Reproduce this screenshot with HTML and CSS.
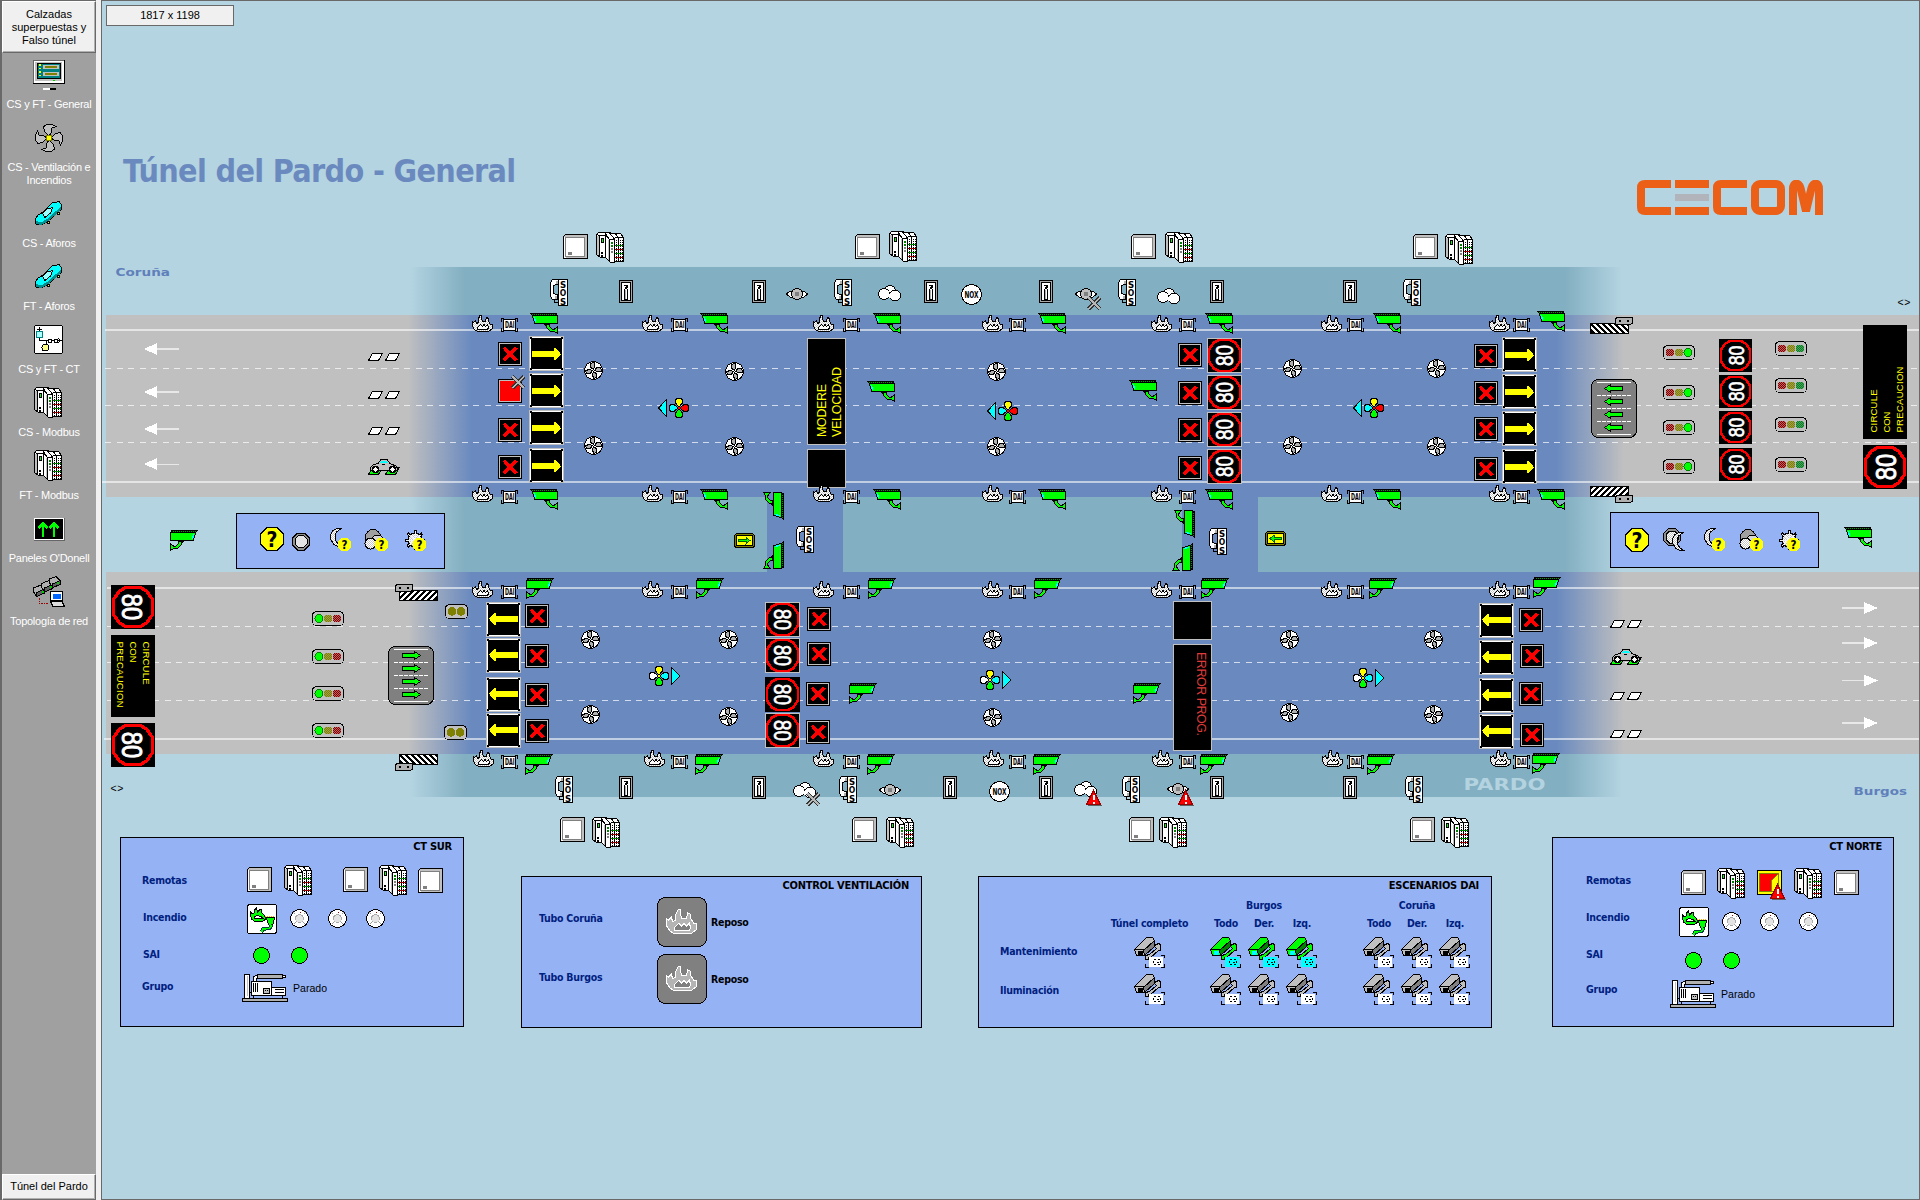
FILE: index.html
```html
<!DOCTYPE html>
<html lang="es">
<head>
<meta charset="utf-8">
<title>Túnel del Pardo - General</title>
<link rel="stylesheet" href="styles.css">
</head>
<body>
<svg class="sprite" aria-hidden="true">
<defs>
<clipPath id="bar-clip"><rect x="1" y="1" width="37" height="9"/></clipPath>
<pattern id="dither" width="2" height="2" patternUnits="userSpaceOnUse"><rect width="2" height="2" fill="#fff"/><path d="M0 0h1v1h-1zM1 1h1v1h-1z" fill="#c8c8c8"/></pattern>
<pattern id="dither-red" width="2" height="2" patternUnits="userSpaceOnUse"><rect width="2" height="2" fill="#c06060"/><path d="M0 0h1v1h-1zM1 1h1v1h-1z" fill="#800000"/></pattern>
<pattern id="dither-green" width="2" height="2" patternUnits="userSpaceOnUse"><rect width="2" height="2" fill="#50a050"/><path d="M0 0h1v1h-1zM1 1h1v1h-1z" fill="#008030"/></pattern>
<pattern id="dither-olive" width="2" height="2" patternUnits="userSpaceOnUse"><rect width="2" height="2" fill="#a0a050"/><path d="M0 0h1v1h-1zM1 1h1v1h-1z" fill="#808000"/></pattern>
<g id="cam">
<path d="M2.500 2.500H27.500V10.500H5L3.500 7Z" fill="#0f0" stroke="#000"/>
<path d="M0 0H27V3H2.500Z"/><path d="M2 1.500H26" stroke="#00a000" stroke-dasharray="1 1"/>
<path d="M4 4h1v2h1v3h-1v-1h-1z" fill="#0ff"/>
<path d="M14.500 11.500H19.500V13.500L22.500 16.500H24L27.500 13.500V20.500L24.500 18.500H20.500L16.500 14.500V12.500Z" fill="#0f0" stroke="#000"/>
</g>
<g id="camr"><use href="#cam" transform="translate(28 0) scale(-1 1)"/></g>
<g id="camdn"><use href="#camr" transform="translate(21 0) rotate(90)"/></g>
<g id="camup"><use href="#cam" transform="translate(21 0) rotate(90)"/></g>
<g id="fire">
<path d="M.5 6.500V11.500L2.500 14.500 5.500 16.500H16.500L20.500 13.500V9.500H18.500L16.500 6.500V3.500L14.500 2.500 13.500 6.500H10.500L9.500 3V.5H8L6.500 3.500V7.500L4.500 8.500 3.500 5.500 1.500 7.500Z" fill="url(#dither)" stroke="#000"/>
<path d="M5.500 12.500V14.500H15.500L16.500 12.500 15.500 9.500 13.500 11.500 12 9.500 10.500 11.500 8.500 9.500Z" fill="#fff" stroke="#000"/>
</g>
<g id="dai">
<path d="M3 .5H.5V4M14 .5H16.500V4M3 13.500H.5V10M14 13.500H16.500V10" fill="none" stroke="#000"/>
<rect x="2.500" y="1.500" width="12" height="11" fill="#fff" stroke="#000"/>
<text class="glyph" x="4" y="10" font-size="8" textLength="9.500" lengthAdjust="spacingAndGlyphs">DAI</text>
</g>
<g id="sos">
<path d="M.5 3.500L2.500 .5H8.500V5.500H5.500L3.500 7V14L5.500 15.500H7.500V20.500H2.500L.5 17.500Z" fill="#fff" stroke="#000"/>
<path d="M6 2h2v3h-2zM5 17h2v3h-2z" fill="#b0b0b0"/>
<path d="M4.500 21V23.500H9" fill="none" stroke="#000"/>
<rect x="8.500" y=".5" width="9" height="26" fill="#fff" stroke="#000"/>
<text class="glyph" x="13" y="8.700" font-size="9.500" text-anchor="middle">S</text>
<text class="glyph" x="13" y="17" font-size="8.500" text-anchor="middle">O</text>
<text class="glyph" x="13" y="25.500" font-size="9.500" text-anchor="middle">S</text>
</g>
<g id="ext">
<rect x=".5" y=".5" width="13" height="22" fill="#a8a8a8" stroke="#000"/>
<rect x="2.500" y="2.500" width="9" height="18" fill="#fff" stroke="#000"/>
<path d="M5.500 19V9.500L7 7.500 8.500 9.500V19Z" fill="#fff" stroke="#000"/><path d="M6 10h1v9h-1z" fill="#b0b0b0"/>
<path d="M5 5.500H9M8.500 5V8M7 6v2" stroke="#000" fill="none"/>
</g>
<g id="eye">
<path d="M.5 6L4 3H18L21.500 6 18 9H4Z" fill="#fff" stroke="#000"/>
<circle cx="11" cy="6" r="5.500" fill="#c0c0c0" stroke="#000"/><circle cx="11" cy="6" r="2.300" fill="#808080"/>
</g>
<g id="cloud">
<g fill="#fff" stroke="#000"><circle cx="12" cy="6" r="5.500"/><circle cx="6" cy="9" r="5.500"/><circle cx="17" cy="10.500" r="5.500"/></g>
<path d="M6 6h5v6h-5zM11 9h5v4h-5z" fill="#fff"/>
</g>
<g id="nox"><circle r="10" fill="#fff" stroke="#000"/>
<text class="glyph" x="-7" y="3.500" font-size="9.500" textLength="14" lengthAdjust="spacingAndGlyphs">NOX</text></g>
<g id="cross"><path d="M1.500 1.500L13 13M13 1.500L1.500 13" stroke="#333" stroke-width="4"/><path d="M1.500 1.500L13 13M13 1.500L1.500 13" stroke="#b8b8b8" stroke-width="2"/></g>
<g id="alarm"><path d="M9 2L16 15.500H2Z" fill="#606060"/><path d="M7.500 .5L14.500 14.500H.5Z" fill="#f00" stroke="#900"/><path d="M6.500 5h2v5h-2zM6.500 11.500h2v2h-2z" fill="#fff"/></g>
<g id="cab">
<path d="M2 0H25V25H0V2Z"/><path d="M2 1H24V24H1V2Z" fill="#c0c0c0"/><path d="M1 3h2v21h-2z" fill="#fff"/>
<rect x="2.500" y="3.500" width="19" height="19" fill="#fff" stroke="#808080"/><path d="M5 18h4v3h-4z" fill="#808080"/>
</g>
<g id="plc">
<path d="M.5 2.500L2.500 .5H13.500L16 1.500H24.500L27.500 5.500V29.500H20L18.500 30.500H14.500L9.500 25.500H4.500L.5 22.500Z" fill="#fff" stroke="#000"/>
<path d="M1 4h2v19h-2zM12 8h1v20h-1z" fill="#c0c0c0"/>
<path d="M3.500 24V3.500H9.500V25.500M1 2.500L3.500 3.500M9.500 3.500L13.500 7.500M13.500 30V7.500H18.500V30M13.500 1L18.500 7M18.500 5.500H27M22.500 5V30M19 1.500L22.500 5.500M9 1L13 7" fill="none" stroke="#000"/>
<path d="M5 6h3v5h-3zM5 20h2v2h-2zM5 23h2v2h-2z"/><path d="M6 7h1v3h-1z" fill="#0f0"/>
<path d="M15 10h2v2h-2zM15 13h2v2h-2z" fill="#008000"/><path d="M15 16h2v2h-2zM15 19h2v2h-2z" fill="#808080"/>
<path d="M20.500 8V29M24.500 8V29M26.500 8V29" stroke="#000" stroke-dasharray="1 1"/>
<path d="M19 13.500H27M19 21.500H27" stroke="#008000"/><path d="M19 17.500H27M19 25.500H27" stroke="#900000"/>
</g>
<path id="blade" d="M0 -1L-2.500 -3 -3.500 -6.500 -1 -8H.5V-6L1 -4Z"/>
<g id="fan"><circle r="9" fill="#fff" stroke="#000"/><g fill="#b0b0b0" stroke="#000"><use href="#blade"/><use href="#blade" transform="rotate(90)"/><use href="#blade" transform="rotate(180)"/><use href="#blade" transform="rotate(270)"/></g></g>
<path id="petal" d="M0 -1L-3.500 -5V-8L-2 -9.500H2L3.500 -8V-5Z" stroke="#000"/>
<g id="rose-l"><path d="M-20.500 0L-12.500 -8.500V8.500Z" fill="#0ff" stroke="#000"/><use href="#petal" fill="#ff0"/><use href="#petal" fill="#f00" transform="rotate(90)"/><use href="#petal" fill="#0f0" transform="rotate(180)"/><use href="#petal" fill="#0ff" transform="rotate(270)"/><path d="M-1 -1h2v2h-2z" fill="#f00"/></g>
<g id="rose-r"><path d="M21 0L12.500 -8.500V8.500Z" fill="#0ff" stroke="#000"/><use href="#petal" fill="#ff0"/><use href="#petal" fill="#0ff" transform="rotate(90)"/><use href="#petal" fill="#0f0" transform="rotate(180)"/><use href="#petal" fill="#fff" transform="rotate(270)"/><path d="M-1 -1h2v2h-2z" fill="#ff0"/></g>
<g id="sx"><rect width="24" height="24"/><rect x="1.500" y="1.500" width="21" height="21" fill="none" stroke="#c0c0c0"/><path d="M6 5.500L18.500 18.500M18.500 5.500L6 18.500" stroke="#f00" stroke-width="3.500"/></g>
<g id="sx-fail"><rect width="24" height="24"/><rect x="1.500" y="1.500" width="21" height="21" fill="#f00" stroke="#c0c0c0"/></g>
<g id="lane-frame"><rect width="35" height="35" fill="#c0c0c0"/><rect x="1.500" y="1.500" width="32" height="32" stroke="#fff"/><path d="M1 1h2v2h-2zM32 1h2v2h-2zM1 32h2v2h-2zM32 32h2v2h-2z"/></g>
<g id="ar"><use href="#lane-frame"/><path d="M3 15H25V12H27L31.500 17.500V18.500L27 24H25V21H3Z" fill="#ff0"/></g>
<g id="al"><use href="#lane-frame"/><path d="M32 14H10V11H8L3.500 16.500V17.500L8 23H10V20H32Z" fill="#ff0"/></g>
<g id="disc80"><rect x="-17.500" y="-17.500" width="35" height="35"/><path d="M-6 -15.500H6L11 -12.500 15.500 -6V6L11 12.500 6 15.500H-6L-11 12.500 -15.500 6V-6L-11 -12.500Z" fill="none" stroke="#f00" stroke-width="2.600"/></g>
<g id="v80"><use href="#disc80"/><text class="led80" transform="rotate(-90)" x="-10.500" y="8.500" textLength="21" lengthAdjust="spacingAndGlyphs">80</text></g>
<g id="w80"><use href="#disc80"/><text class="led80" transform="rotate(90)" x="-10.500" y="8.500" textLength="21" lengthAdjust="spacingAndGlyphs">80</text></g>
<g id="tl-body"><rect x=".5" y=".5" width="31" height="14" rx="4" fill="#c0c0c0" stroke="#000"/></g>
<g id="tl-r"><use href="#tl-body"/><circle cx="7" cy="7.500" r="4" fill="url(#dither-red)"/><circle cx="16" cy="7.500" r="4" fill="url(#dither-olive)"/><circle cx="25" cy="7.500" r="4" fill="#0f0" stroke="#008000"/></g>
<g id="tl-l"><use href="#tl-body"/><circle cx="25" cy="7.500" r="4" fill="url(#dither-red)"/><circle cx="16" cy="7.500" r="4" fill="url(#dither-olive)"/><circle cx="7" cy="7.500" r="4" fill="#0f0" stroke="#008000"/></g>
<g id="tl-off"><use href="#tl-body"/><circle cx="7" cy="7.500" r="4" fill="url(#dither-red)"/><circle cx="16" cy="7.500" r="4" fill="url(#dither-olive)"/><circle cx="25" cy="7.500" r="4" fill="url(#dither-green)"/></g>
<g id="tl2"><rect x=".5" y=".5" width="22" height="14" rx="4" fill="#c0c0c0" stroke="#000"/><circle cx="7" cy="7.500" r="4.300" fill="#808000"/><circle cx="16" cy="7.500" r="4.300" fill="#808000"/></g>
<path id="garrow" d="M.5 4.500L6.500 .5V2.500H18.500V6.500H6.500V8.500Z" fill="#0f0" stroke="#000"/>
<g id="lanes"><rect x=".5" y=".5" width="45" height="58" rx="7" fill="#808080" stroke="#000"/><path d="M6 3.500H40M6 55.500H40" stroke="#fff"/><path d="M6 16.500H40M6 29.500H40M6 42.500H40" stroke="#fff" stroke-dasharray="4 1"/></g>
<g id="lanes-l"><use href="#lanes"/><use href="#garrow" x="13" y="5"/><use href="#garrow" x="13" y="18"/><use href="#garrow" x="13" y="31"/><use href="#garrow" x="13" y="44"/></g>
<g id="lanes-r"><use href="#lanes-l" transform="translate(46 0) scale(-1 1)"/></g>
<g id="bar"><rect width="39" height="11"/><path clip-path="url(#bar-clip)" d="M-3 0L8 11M3 0L14 11M9 0L20 11M15 0L26 11M21 0L32 11M27 0L38 11M33 0L44 11" stroke="#fff" stroke-width="2.400"/></g>
<g id="box"><path d="M2 .5H17.500V6L15.500 7.500H.5V2Z" fill="#b0b0b0" stroke="#000"/><path d="M4 3h2v2h-2zM12 3h2v2h-2z"/></g>
<g id="det"><path d="M4.500 .5H14.500L10.500 7.500H.5ZM21.500 .5H31.500L27.500 7.500H17.500Z" fill="#fff" stroke="#000"/></g>
<g id="car"><path d="M4.500 8.500H14.500L10.500 15.500H.5ZM21.500 8.500H31.500L27.500 15.500H17.500Z" fill="#0f0" stroke="#000"/><path d="M2.500 11V8.500L5 6 10 4.500 13 .5H19L22 4.500 28 7 29.500 9V11H2.500Z" fill="#c0c0c0" stroke="#000"/><path d="M12 4L14 1.500H18L20 4Z" fill="#0ff"/><path d="M14 5.500H17" stroke="#000"/><g fill="#fff" stroke="#000" stroke-width="1.500"><circle cx="7.500" cy="10.500" r="3"/><circle cx="24.500" cy="10.500" r="3"/></g></g>
<g id="exit"><rect x=".5" y=".5" width="20" height="14" rx="3" fill="#808000" stroke="#000"/><rect x="2.500" y="2.500" width="16" height="10" fill="#ff0" stroke="#000"/><path d="M4.500 6.500H12V4.500L16 7.500 12 10.500V8.500H4.500Z" fill="#0f0" stroke="#006000"/></g>
<g id="q"><path d="M-5 -11.500H5L11.500 -5V5L5 11.500H-5L-11.500 5V-5Z" fill="#ff0" stroke="#000"/><text class="glyph" x="0" y="7.500" font-size="21" text-anchor="middle">?</text></g>
<g id="qs"><path d="M-3 -6.500H3L6.500 -3V3L3 6.500H-3L-6.500 3V-3Z" fill="#ff0"/><text class="glyph" x="0" y="4.500" font-size="11.500" text-anchor="middle">?</text></g>
<g id="ring"><path d="M-3.500 -8.500H3.500L8.500 -3.500V3.500L3.500 8.500H-3.500L-8.500 3.500V-3.500Z" fill="#909090" stroke="#000"/><path d="M-2.500 -6H2.500L6 -2.500V2.500L2.500 6H-2.500L-6 2.500V-2.500Z" fill="url(#dither)" stroke="#000"/></g>
<g id="moon"><path d="M12 .5H7L2.500 3 .5 7V11L3.500 16 8 18.500H12L8 16 5.500 12 5 8 6.500 4 9 2Z" fill="url(#dither)" stroke="#000"/></g>
<g id="orbs"><circle cx="0" cy="0" r="7.500" fill="#a0a0a0" stroke="#000"/><circle cx="4.500" cy="4.500" r="6.500" fill="#d8d8d8" stroke="#000"/><circle cx="-2.500" cy="6.500" r="5.500" fill="url(#dither)" stroke="#000"/></g>
<g id="sun"><g stroke="#000" stroke-width="3"><path d="M0 -10V10M-10 0H10M-7.500 -6.500L7.500 6.500M7.500 -6.500L-7.500 6.500"/></g><circle r="7" fill="url(#dither)" stroke="#000"/><path d="M0 -9V9M-9 0H9M-6.500 -5.500L6.500 5.500M6.500 -5.500L-6.500 5.500" stroke="#f0f0f0"/></g>
<g id="hose"><rect x=".5" y=".5" width="29" height="29" rx="2.500" fill="#fff" stroke="#000"/><path d="M3.500 7.500L5 9.500 7.500 9 8 5.500 9.500 3.500 10.500 8 12.500 6 14.500 5.500 15 9 17.500 11.500 19 15 15 17.500 7.500 17.500 4.500 15 3.500 11Z" fill="#0f0" stroke="#000"/><path d="M7.500 14.500V12.500L10 11.500 14 12.500 16 14.500Z" fill="#fff" stroke="#000"/><path d="M19 13H27.500L26.500 19.500 24.500 21H22L20.500 18Z" fill="#0f0" stroke="#000"/><path d="M23 21L24 22 22.500 24.500 16 25 14.500 28" fill="none" stroke="#004040" stroke-width="3.500"/><path d="M23 20L24 22 22.500 24.500 16 25 14.500 28" fill="none" stroke="#0f0" stroke-width="1.500"/><path d="M18 12.500H28" stroke="#fa0" stroke-dasharray="1 1"/></g>
<g id="dome"><circle r="9" fill="#fff" stroke="#000"/><circle r="4" fill="url(#dither)" stroke="#aaa"/><path d="M-6 -6l2 2M6 -6l-2 2M-6 6l2 -2M6 6l-2 -2" stroke="#999"/><path d="M0 -7h1v1h-1z" fill="#900"/></g>
<circle id="ok" r="8" fill="#0f0" stroke="#000"/>
<g id="gen"><rect x="2.500" y=".5" width="5" height="24" fill="#fff" stroke="#000"/><path d="M5 2v20" stroke="#c0c0c0"/><path d="M11.500 8V3L13.500 1.500H16V4H14.500V8Z" fill="#fff" stroke="#000"/><rect x="15.500" y=".5" width="25" height="4" fill="#b0b0b0" stroke="#000"/><rect x="40.500" y="1.500" width="3" height="2" fill="#fff" stroke="#000"/><rect x="9.500" y="7.500" width="20" height="14" fill="#fff" stroke="#000"/><rect x="29.500" y="13.500" width="14" height="8" fill="#fff" stroke="#000"/><path d="M11.500 9v9M13.500 9v9M15.500 9v9M33 15.500H42M33 18.500H42M9 18h-2M11.500 22v3M40.500 22v3" stroke="#000"/><rect x="21.500" y="14.500" width="6" height="5" fill="#c0c0c0" stroke="#000"/><path d="M23 16h1v1h-1zM25 16h1v1h-1z"/><rect x=".5" y="24.500" width="45" height="3" fill="#b0b0b0" stroke="#000"/></g>
<g id="ptz" stroke="#000"><path class="ptz-mount" d="M11.500 18.500L15.500 17.500 22.500 11.500 20.500 9.500 21.500 7.500 25.500 6.500 26.500 8.500V13.500H24.500L16.500 20.500H14.500V22.500H11.500Z"/><path class="ptz-top" d="M.5 12.500L12.500 .5H18.500L20.500 3.500 9.500 13.500Z"/><path class="ptz-side" d="M9.500 13.500L20.500 3.500V9.500L10.500 18.500Z"/><path class="ptz-top" d="M.5 12.500H9.500L10.500 18.500H2.500Z"/><path class="ptz-lens" d="M4 14H8.500V17.500H4Z" stroke="none"/><path class="ptz-roi" d="M15 20H29V29.500H15Z" stroke="none"/><path d="M27 18.500H30.500V21M30.500 27V30.500H27M15 30.500H11.500V27" fill="none"/><path d="M20 22.500h2M24 22.500h2M20 27.500h2M24 27.500h2M19.500 24v2M26.500 24v2M22.500 25h2" fill="none"/></g>
<g id="flame-big"><rect x=".5" y=".5" width="49" height="49" rx="8" fill="#808080" stroke="#000"/><g transform="translate(9 12) scale(1.500)" stroke="#fff" stroke-width=".7"><path d="M.5 6.500V11.500L2.500 14.500 5.500 16.500H16.500L20.500 13.500V9.500H18.500L16.500 6.500V3.500L14.500 2.500 13.500 6.500H10.500L9.500 3V.5H8L6.500 3.500V7.500L4.500 8.500 3.500 5.500 1.500 7.500Z" fill="#b4b4b4"/><path d="M5.500 12.500V14.500H15.500L16.500 12.500 15.500 9.500 13.500 11.500 12 9.500 10.500 11.500 8.500 9.500Z" fill="#808080"/></g></g>
<g id="pc-fan"><path d="M0 -2L-4.500 -6.500 -5.500 -11 -2.500 -13.500 3 -13.500 7 -11.500 3 -10 2 -5Z" fill="#c0c0c0" stroke="#000"/></g>
<g id="auto"><path d="M2.500 21L5 17 11 13.500 19 5 26 3.500 28.500 6.500V11L24 15 14 24 8 27 3 26Z" fill="#0ff" stroke="#000"/><path d="M9.500 15.500L14 11 19.500 9.500 18 14.500 12 19.500Z" fill="#9ff" stroke="#000"/><path d="M3 23L8 24.500 14 21 28 8.500V12L14 24 8 27 3 26Z" fill="#009090"/><path d="M14 23.500h2.500v2h-2.500zM24 14h2.500v2h-2.500z" fill="#ff0" stroke="#000"/></g>
<!-- equipment repeated along each tunnel wall -->
<g id="fires"><use href="#fire" x="472"/><use href="#fire" x="642"/><use href="#fire" x="813"/><use href="#fire" x="982"/><use href="#fire" x="1151"/><use href="#fire" x="1321"/><use href="#fire" x="1489"/></g>
<g id="dais"><use href="#dai" x="501"/><use href="#dai" x="671"/><use href="#dai" x="843"/><use href="#dai" x="1009"/><use href="#dai" x="1179"/><use href="#dai" x="1347"/><use href="#dai" x="1513"/></g>
<g id="exts"><use href="#ext" x="619"/><use href="#ext" x="752"/><use href="#ext" x="1039"/><use href="#ext" x="1210"/><use href="#ext" x="1343"/></g>
</defs>
</svg>

<aside class="sidebar">
<button class="tab tab-top">Calzadas<br>superpuestas y<br>Falso túnel</button>
<nav class="nav">
<a class="nav-item"><svg viewBox="0 0 32 32"><rect x=".5" y="1" width="31" height="23" fill="#fff" stroke="#666"/><path d="M31.500 1V24.500H0" fill="none" stroke="#000" stroke-width="1.500"/><rect x="2" y="3" width="27" height="19" fill="#c0c0c0"/><rect x="4.500" y="4.500" width="23" height="14.500" fill="#008080" stroke="#000"/><path d="M7 5V19" stroke="#ff0" stroke-width="1.500" stroke-dasharray="1.500 2"/><path d="M10 8H26M10 15H26" stroke="#c0c0c0" stroke-width="4"/><path d="M12 8H24M12 15H24" stroke="#808000" stroke-width="2"/><path d="M20 21.500H22" stroke="#0c0"/><path d="M10 29h7v2h-7z" fill="#fff"/><path d="M17 29h6v2h-6z"/></svg><span>CS y FT - General</span></a>
<a class="nav-item two"><svg viewBox="0 0 32 32"><g transform="translate(16 16)"><use href="#pc-fan"/><use href="#pc-fan" transform="rotate(90)"/><use href="#pc-fan" transform="rotate(180)"/><use href="#pc-fan" transform="rotate(270)"/><rect x="-2.500" y="-2.500" width="5" height="5" fill="#ff0" stroke="#808000"/></g></svg><span>CS - Ventilación e<br>Incendios</span></a>
<a class="nav-item"><svg viewBox="0 0 32 32"><use href="#auto"/></svg><span>CS - Aforos</span></a>
<a class="nav-item"><svg viewBox="0 0 32 32"><use href="#auto"/></svg><span>FT - Aforos</span></a>
<a class="nav-item"><svg viewBox="0 0 32 32"><rect x="1.500" y="1.500" width="28" height="28" rx="2" fill="#fff" stroke="#000"/><path d="M6.500 3V16.500H28M4 5.500H9M13 16.500V22M25 14.500L28 16.500 25 18.500" fill="none" stroke="#000"/><rect x="3.500" y="7.500" width="6" height="6" fill="#aff" stroke="#008080"/><circle cx="12.500" cy="23.500" r="3.500" fill="#ff8" stroke="#000"/><path d="M15 15h3v3h-3zM21 15h3v3h-3z" fill="#fff" stroke="#000"/></svg><span>CS y FT - CT</span></a>
<a class="nav-item"><svg viewBox="0 0 32 32"><use href="#plc" x="1"/></svg><span>CS - Modbus</span></a>
<a class="nav-item"><svg viewBox="0 0 32 32"><use href="#plc" x="1"/></svg><span>FT - Modbus</span></a>
<a class="nav-item"><svg viewBox="0 0 32 32"><rect x="1.500" y="5.500" width="29" height="21" stroke="#fff" stroke-width="1.500"/><path d="M31 5V27.500H1" fill="none" stroke="#666"/><path d="M10 24V10M21 24V10M5.500 15L10 10.500 14.500 15M16.500 15L21 10.500 25.500 15" fill="none" stroke="#0f0" stroke-width="2.500"/></svg><span>Paneles O'Donell</span></a>
<a class="nav-item"><svg viewBox="0 0 32 32"><g fill="#b0b0b0" stroke="#000"><path d="M.5 12L8 9 11.500 13 3.500 16.500V20L.5 16Z"/><path d="M3.500 16.500L11.500 13V17L4 20.500Z" fill="#606060"/><path d="M8.500 7.500L16 4.500 19.500 8.500 11.500 12V15.500L8.500 11Z"/><path d="M11.500 12L19.500 8.500V12.500L12 16Z" fill="#606060"/><path d="M16.500 3L23 .5 27 4.500 19.500 8V11L16.500 7Z"/><path d="M19.500 8L27 4.500V8.500L20 11.500Z" fill="#606060"/></g><path d="M9 14.500h2v2h-2zM17 10h2v2h-2zM24 6h2v2h-2z" fill="#0c0"/><path d="M6 22V27.500H16" fill="none" stroke="#900" stroke-dasharray="1.500 1"/><rect x="17.500" y="15.500" width="12" height="9" fill="#fff" stroke="#000"/><rect x="20" y="17.500" width="7.500" height="5.500" fill="#06f"/><path d="M17.500 25.500H29L31.500 30.500H20Z" fill="#ddd" stroke="#000"/></svg><span>Topología de red</span></a>
</nav>
<button class="tab tab-bottom">Túnel del Pardo</button>
</aside>
<div class="splitter"></div>

<main class="stage">
<div class="size-badge">1817 x 1198</div>
<header class="heading">
<h1>Túnel del Pardo - General</h1>
<svg class="logo" viewBox="0 0 186 35" role="img" aria-label="CECOM"><g fill="none" stroke="#ec5f17" stroke-width="8"><path d="M34 4H8Q4 4 4 8V27Q4 31 8 31H34M38 4H72M38 31H72M110 4H84Q80 4 80 8V27Q80 31 84 31H110"/><rect x="118" y="4" width="26" height="27" rx="5"/><path d="M156 35V9C156 2 162 2 163.500 8L169 31L174.500 8C176 2 182 2 182 9V35"/></g><path d="M38 14H72V21H38Z" fill="#b1b4bb"/></svg>
</header>

<svg class="map" viewBox="102 220 1817 617">
<defs>
<linearGradient id="g-teal" gradientUnits="userSpaceOnUse" x1="410" x2="1622" y1="0" y2="0"><stop offset="0" stop-color="#82afc1" stop-opacity="0"/><stop offset=".045" stop-color="#82afc1"/><stop offset=".953" stop-color="#82afc1"/><stop offset="1" stop-color="#82afc1" stop-opacity="0"/></linearGradient>
<linearGradient id="g-road" gradientUnits="userSpaceOnUse" x1="408" x2="1624" y1="0" y2="0"><stop offset="0" stop-color="#6a8abf" stop-opacity="0"/><stop offset=".052" stop-color="#6a8abf"/><stop offset=".945" stop-color="#6a8abf"/><stop offset="1" stop-color="#6a8abf" stop-opacity="0"/></linearGradient>
</defs>
<rect x="410" y="267" width="1212" height="530" fill="url(#g-teal)"/>
<rect x="105.500" y="314.500" width="1813.500" height="182.500" fill="#c0c0c0"/><rect x="408" y="314.500" width="1216" height="182.500" fill="url(#g-road)"/>
<rect x="105.500" y="571.500" width="1813.500" height="182.500" fill="#c0c0c0"/><rect x="408" y="571.500" width="1216" height="182.500" fill="url(#g-road)"/>
<path d="M767 496h76v76h-76zM1182 496h76v76h-76z" fill="#6a8abf"/>
<path class="edge" d="M105 330H1919M102 482H1919M107 588H1919M104 739H1919"/>
<path class="dash" d="M105 368.500H1919M105 405.500H1919M105 442.500H1919M107 626.500H1919M107 662.500H1919M107 700.500H1919"/>
<g class="flow"><path d="M144 349L157 343V355ZM144 392L157 386V398ZM144 429L157 423V435ZM144 464L157 458V470ZM1878 608L1864 602V614ZM1878 643L1864 637V649ZM1878 680.500L1864 674.500V686.500ZM1878 723L1864 717V729Z"/><path class="stem" d="M157 349H179M157 392H179M157 429H179M157 464.500H179M1842 608H1864M1842 643H1864M1842 680.500H1864M1842 723H1864"/></g>

<text class="place" x="115.500" y="276" textLength="54.500" lengthAdjust="spacingAndGlyphs">Coruña</text>
<text class="place" x="1853.500" y="795" textLength="53.500" lengthAdjust="spacingAndGlyphs">Burgos</text>
<text class="zone" x="1463.500" y="790" textLength="82" lengthAdjust="spacingAndGlyphs">PARDO</text>
<text class="mark" x="1897.500" y="306" textLength="13">&lt;&gt;</text>
<text class="mark" x="110.500" y="792" textLength="13">&lt;&gt;</text>

<g><use href="#cab" x="563" y="234"/><use href="#cab" x="855" y="234"/><use href="#cab" x="1131" y="234"/><use href="#cab" x="1413" y="234"/><use href="#cab" x="560" y="817"/><use href="#cab" x="852" y="817"/><use href="#cab" x="1129" y="817"/><use href="#cab" x="1410" y="817"/>
<use href="#plc" x="596" y="232"/><use href="#plc" x="889" y="231"/><use href="#plc" x="1165" y="232"/><use href="#plc" x="1445" y="234"/><use href="#plc" x="592" y="817"/><use href="#plc" x="886" y="817"/><use href="#plc" x="1159" y="817"/><use href="#plc" x="1441" y="817"/></g>

<g><use href="#sos" x="550" y="279"/><use href="#sos" x="834" y="279"/><use href="#sos" x="1118" y="279"/><use href="#sos" x="1403" y="279"/><use href="#sos" x="796" y="526"/><use href="#sos" x="1209" y="528"/><use href="#sos" x="555" y="776"/><use href="#sos" x="839" y="776"/><use href="#sos" x="1122" y="776"/><use href="#sos" x="1405" y="776"/>
<use href="#exts" y="280"/><use href="#ext" x="924" y="280"/><use href="#exts" y="776"/><use href="#ext" x="943" y="776"/>
<use href="#eye" x="786" y="288"/><use href="#eye" x="1075" y="288"/><use href="#cross" x="1087" y="296"/><use href="#eye" x="879" y="784"/><use href="#eye" x="1167" y="783"/><use href="#alarm" x="1178" y="790"/>
<use href="#cloud" x="878" y="285"/><use href="#cloud" x="1157" y="288"/><use href="#cloud" x="793" y="782"/><use href="#cross" x="806" y="792"/><use href="#cloud" x="1074" y="781"/><use href="#alarm" x="1086" y="790"/>
<use href="#nox" x="971.500" y="294.500"/><use href="#nox" x="999.500" y="791.500"/></g>

<g><use href="#fan" x="593.500" y="370.500"/><use href="#fan" x="734.500" y="371.500"/><use href="#fan" x="593.500" y="445.500"/><use href="#fan" x="734.500" y="446.500"/><use href="#fan" x="996.500" y="371.500"/><use href="#fan" x="996.500" y="446.500"/><use href="#fan" x="1292.500" y="368.500"/><use href="#fan" x="1292.500" y="445.500"/><use href="#fan" x="1436.500" y="368.500"/><use href="#fan" x="1436.500" y="446.500"/>
<use href="#fan" x="590.500" y="639.500"/><use href="#fan" x="728.500" y="639.500"/><use href="#fan" x="590.500" y="714.500"/><use href="#fan" x="728.500" y="716.500"/><use href="#fan" x="992.500" y="639.500"/><use href="#fan" x="992.500" y="717.500"/><use href="#fan" x="1289.500" y="639.500"/><use href="#fan" x="1433.500" y="639.500"/><use href="#fan" x="1289.500" y="712.500"/><use href="#fan" x="1433.500" y="714.500"/>
<use href="#rose-l" x="679" y="408"/><use href="#rose-l" x="1008" y="411"/><use href="#rose-l" x="1374" y="408"/><use href="#rose-r" x="659" y="676"/><use href="#rose-r" x="990" y="680"/><use href="#rose-r" x="1363" y="678"/></g>

<g><use href="#sx" x="498" y="342"/><use href="#sx-fail" x="498" y="379"/><use href="#cross" x="511" y="375"/><use href="#sx" x="498" y="418"/><use href="#sx" x="498" y="455"/><use href="#sx" x="1178" y="343"/><use href="#sx" x="1178" y="381"/><use href="#sx" x="1178" y="418"/><use href="#sx" x="1178" y="456"/><use href="#sx" x="1474" y="344"/><use href="#sx" x="1474" y="381"/><use href="#sx" x="1474" y="417"/><use href="#sx" x="1474" y="457"/>
<use href="#sx" x="525" y="604"/><use href="#sx" x="525" y="644"/><use href="#sx" x="525" y="683"/><use href="#sx" x="525" y="719"/><use href="#sx" x="807" y="607"/><use href="#sx" x="807" y="642"/><use href="#sx" x="806" y="682"/><use href="#sx" x="806" y="720"/><use href="#sx" x="1519" y="608"/><use href="#sx" x="1520" y="644"/><use href="#sx" x="1519" y="682"/><use href="#sx" x="1520" y="723"/>
<use href="#ar" x="529" y="336"/><use href="#ar" x="529" y="373"/><use href="#ar" x="529" y="410"/><use href="#ar" x="529" y="448"/><use href="#ar" x="1502" y="337"/><use href="#ar" x="1502" y="374"/><use href="#ar" x="1502" y="411"/><use href="#ar" x="1502" y="449"/>
<use href="#al" x="486" y="602"/><use href="#al" x="486" y="638"/><use href="#al" x="486" y="677"/><use href="#al" x="486" y="713"/><use href="#al" x="1479" y="603"/><use href="#al" x="1479" y="640"/><use href="#al" x="1479" y="678"/><use href="#al" x="1479" y="714"/></g>

<g><use href="#v80" x="1224.500" y="355.500"/><use href="#v80" x="1224.500" y="392.500"/><use href="#v80" x="1224.500" y="429.500"/><use href="#v80" x="1224.500" y="466.500"/>
<use href="#v80" transform="translate(1735.500 355.500) scale(.94)"/><use href="#v80" transform="translate(1735.500 391.500) scale(.94)"/><use href="#v80" transform="translate(1735.500 427.500) scale(.94)"/><use href="#v80" transform="translate(1735.500 464.500) scale(.94)"/><use href="#v80" transform="translate(1885 467) scale(1.257)"/>
<use href="#w80" x="782.500" y="619.500"/><use href="#w80" x="782.500" y="655.500"/><use href="#w80" x="782.500" y="694.500"/><use href="#w80" x="782.500" y="730.500"/><use href="#w80" transform="translate(133 607) scale(1.257)"/><use href="#w80" transform="translate(133 745) scale(1.257)"/>
<path class="frame" d="M1207.500 338.500h34v34h-34zM1207.500 375.500h34v34h-34zM1207.500 412.500h34v34h-34zM1207.500 449.500h34v34h-34zM765.500 602.500h34v34h-34zM765.500 638.500h34v34h-34zM765.500 713.500h34v34h-34z"/></g>

<g class="vms"><rect x="807.500" y="338.500" width="38" height="106"/><rect x="807.500" y="449.500" width="38" height="38"/><rect x="1173.500" y="601.500" width="38" height="38"/><rect x="1173.500" y="644.500" width="38" height="106"/></g>
<rect x="1863" y="325" width="44" height="114"/><rect x="111" y="635" width="44" height="82"/>
<g class="led"><text class="led-l" transform="translate(826 437) rotate(-90)" textLength="53">MODERE</text><text class="led-l" transform="translate(841 437) rotate(-90)" textLength="70">VELOCIDAD</text>
<text transform="translate(1877 432.500) rotate(-90)" textLength="43">CIRCULE</text><text transform="translate(1890 432.500) rotate(-90)" textLength="21">CON</text><text transform="translate(1903 432.500) rotate(-90)" textLength="66">PRECAUCION</text>
<text transform="translate(143 641.500) rotate(90)" textLength="43">CIRCULE</text><text transform="translate(130 641.500) rotate(90)" textLength="21">CON</text><text transform="translate(117 641.500) rotate(90)" textLength="66">PRECAUCION</text>
<text class="led-l led-err" transform="translate(1197 652) rotate(90)" textLength="84">ERROR PROG.</text></g>

<g><use href="#fires" y="315"/><use href="#fires" y="485"/><use href="#fires" y="581"/>
<use href="#fire" x="473" y="750"/><use href="#fire" x="644" y="750"/><use href="#fire" x="813" y="750"/><use href="#fire" x="983" y="750"/><use href="#fire" x="1152" y="750"/><use href="#fire" x="1322" y="750"/><use href="#fire" x="1490" y="750"/>
<use href="#dais" y="318"/><use href="#dais" y="490"/><use href="#dais" y="585"/><use href="#dais" y="755"/></g>

<g><use href="#cam" x="530" y="313"/><use href="#cam" x="700" y="313"/><use href="#cam" x="873" y="313"/><use href="#cam" x="1038" y="313"/><use href="#cam" x="1205" y="313"/><use href="#cam" x="1373" y="313"/><use href="#cam" x="1537" y="311"/>
<use href="#cam" x="530" y="489"/><use href="#cam" x="700" y="489"/><use href="#cam" x="873" y="489"/><use href="#cam" x="1038" y="489"/><use href="#cam" x="1205" y="489"/><use href="#cam" x="1373" y="489"/><use href="#cam" x="1537" y="489"/>
<use href="#cam" x="867" y="381"/><use href="#cam" x="1129" y="380"/><use href="#cam" x="1844" y="527"/><use href="#camr" x="170" y="530"/>
<use href="#camr" x="526" y="578"/><use href="#camr" x="696" y="578"/><use href="#camr" x="868" y="578"/><use href="#camr" x="1034" y="578"/><use href="#camr" x="1201" y="578"/><use href="#camr" x="1369" y="578"/><use href="#camr" x="1533" y="577"/>
<use href="#camr" x="525" y="754"/><use href="#camr" x="695" y="754"/><use href="#camr" x="867" y="754"/><use href="#camr" x="1033" y="754"/><use href="#camr" x="1200" y="754"/><use href="#camr" x="1367" y="754"/><use href="#camr" x="1532" y="753"/>
<use href="#camr" x="849" y="683"/><use href="#camr" x="1133" y="683"/>
<use href="#camdn" x="763" y="492"/><use href="#camup" x="763" y="541"/><use href="#camdn" x="1174" y="510"/><use href="#camup" x="1172" y="543"/></g>

<g><use href="#tl-r" x="1663" y="345"/><use href="#tl-r" x="1663" y="385"/><use href="#tl-r" x="1663" y="420"/><use href="#tl-r" x="1663" y="459"/><use href="#tl-off" x="1775" y="341"/><use href="#tl-off" x="1775" y="378"/><use href="#tl-off" x="1775" y="417"/><use href="#tl-off" x="1775" y="457"/>
<use href="#tl-l" x="312" y="611"/><use href="#tl-l" x="312" y="649"/><use href="#tl-l" x="312" y="686"/><use href="#tl-l" x="312" y="723"/><use href="#tl2" x="445" y="604"/><use href="#tl2" x="444" y="725"/>
<use href="#lanes-l" x="1591" y="379"/><use href="#lanes-r" x="388" y="646"/>
<use href="#bar" x="1590" y="323"/><use href="#box" x="1615" y="317"/><use href="#bar" transform="translate(1629 486) scale(-1 1)"/><use href="#box" x="1615" y="495"/>
<use href="#bar" transform="translate(438 590) scale(-1 1)"/><use href="#box" x="395" y="584"/><use href="#bar" x="399" y="754"/><use href="#box" x="395" y="763"/>
<use href="#det" x="368" y="353"/><use href="#det" x="368" y="391"/><use href="#det" x="368" y="427"/><use href="#car" x="368" y="459"/><use href="#det" x="1610" y="620"/><use href="#car" x="1610" y="649"/><use href="#det" x="1610" y="692"/><use href="#det" x="1610" y="730"/>
<use href="#exit" x="734" y="533"/><use href="#exit" transform="translate(1286 531) scale(-1 1)"/></g>

<g><rect class="plate" x="236.500" y="513.500" width="208" height="55"/><use href="#q" x="272" y="539"/><use href="#ring" x="301" y="541.500"/><use href="#moon" x="330" y="528"/><use href="#qs" x="344.500" y="544.500"/><use href="#orbs" x="373" y="537"/><use href="#qs" x="381.500" y="544.500"/><use href="#sun" x="415" y="540"/><use href="#qs" x="419.500" y="544.500"/>
<rect class="plate" x="1610.500" y="512.500" width="208" height="55"/><use href="#q" x="1637" y="540"/><use href="#ring" x="1672" y="537"/><use href="#moon" x="1672" y="532"/><use href="#moon" x="1704" y="528"/><use href="#qs" x="1718.500" y="544.500"/><use href="#orbs" x="1748" y="537"/><use href="#qs" x="1756.500" y="544.500"/><use href="#sun" x="1789" y="540"/><use href="#qs" x="1793.500" y="544.500"/></g>
</svg>

<section class="panels">
<article class="panel ct">
<h2>CT SUR</h2>
<div class="ct-body">
<ul class="ct-labels"><li>Remotas</li><li class="in">Incendio</li><li class="in">SAI</li><li>Grupo</li></ul>
<svg class="ct-devices" viewBox="240 855 218 160">
<use href="#cab" x="247" y="867"/><use href="#plc" x="284" y="865"/><use href="#cab" x="343" y="867"/><use href="#plc" x="379" y="865"/><use href="#cab" x="418" y="868"/>
<use href="#hose" x="247" y="904"/><use href="#dome" x="299.500" y="918.500"/><use href="#dome" x="337.500" y="918.500"/><use href="#dome" x="375.500" y="918.500"/>
<use href="#ok" x="261.500" y="955.500"/><use href="#ok" x="299.500" y="955.500"/>
<use href="#gen" x="242" y="974"/><text class="state" x="293" y="992" textLength="34" lengthAdjust="spacingAndGlyphs">Parado</text>
</svg>
</div>
</article>

<article class="panel vent">
<h2>CONTROL VENTILACIÓN</h2>
<div class="vent-row"><span>Tubo Coruña</span><svg viewBox="0 0 50 50"><use href="#flame-big"/></svg><b>Reposo</b></div>
<div class="vent-row"><span>Tubo Burgos</span><svg viewBox="0 0 50 50"><use href="#flame-big"/></svg><b>Reposo</b></div>
</article>

<article class="panel scen">
<h2>ESCENARIOS DAI</h2>
<div class="scen-grid">
<span class="grp g-bur">Burgos</span><span class="grp g-cor">Coruña</span>
<span class="h c2">Túnel completo</span><span class="h c4">Todo</span><span class="h c5">Der.</span><span class="h c6">Izq.</span><span class="h c8">Todo</span><span class="h c9">Der.</span><span class="h c10">Izq.</span>
<span class="rowl r3">Mantenimiento</span><svg class="p r3 c2" viewBox="0 0 31 32"><use href="#ptz"/></svg><svg class="p r3 c4 on" viewBox="0 0 31 32"><use href="#ptz"/></svg><svg class="p r3 c5 on" viewBox="0 0 31 32"><use href="#ptz"/></svg><svg class="p r3 c6 on" viewBox="0 0 31 32"><use href="#ptz"/></svg><svg class="p r3 c8" viewBox="0 0 31 32"><use href="#ptz"/></svg><svg class="p r3 c9" viewBox="0 0 31 32"><use href="#ptz"/></svg><svg class="p r3 c10" viewBox="0 0 31 32"><use href="#ptz"/></svg>
<span class="rowl r4">Iluminación</span><svg class="p r4 c2" viewBox="0 0 31 32"><use href="#ptz"/></svg><svg class="p r4 c4" viewBox="0 0 31 32"><use href="#ptz"/></svg><svg class="p r4 c5" viewBox="0 0 31 32"><use href="#ptz"/></svg><svg class="p r4 c6" viewBox="0 0 31 32"><use href="#ptz"/></svg><svg class="p r4 c8" viewBox="0 0 31 32"><use href="#ptz"/></svg><svg class="p r4 c9" viewBox="0 0 31 32"><use href="#ptz"/></svg><svg class="p r4 c10" viewBox="0 0 31 32"><use href="#ptz"/></svg>
</div>
</article>

<article class="panel ct ct-norte">
<h2>CT NORTE</h2>
<div class="ct-body">
<ul class="ct-labels"><li>Remotas</li><li>Incendio</li><li>SAI</li><li>Grupo</li></ul>
<svg class="ct-devices" viewBox="1670 855 218 160">
<use href="#cab" x="1681" y="870"/><use href="#plc" x="1717" y="868"/>
<path d="M1757.500 870.500h24v24h-24z" fill="#ff0" stroke="#000"/><path d="M1759.500 873.500h19v18h-19z" fill="#f00" stroke="#808000"/><path d="M1778.500 873.500v18h-7v-11z" fill="#ff0" stroke="#808000"/><use href="#alarm" x="1770" y="884"/>
<use href="#plc" x="1794" y="868"/><use href="#cab" x="1834" y="870"/>
<use href="#hose" x="1679" y="907"/><use href="#dome" x="1731.500" y="921.500"/><use href="#dome" x="1769.500" y="921.500"/><use href="#dome" x="1808.500" y="921.500"/>
<use href="#ok" x="1693.500" y="960.500"/><use href="#ok" x="1731.500" y="960.500"/>
<use href="#gen" x="1670" y="980"/><text class="state" x="1721" y="998" textLength="34" lengthAdjust="spacingAndGlyphs">Parado</text>
</svg>
</div>
</article>
</section>
</main>
</body>
</html>
```

FILE: styles.css
```css
* { box-sizing: border-box; }
html, body { height: 100%; margin: 0; }
body {
  display: flex;
  height: 1200px;
  overflow: hidden;
  background: #f0f0f0;
  font-family: "Liberation Sans", Arial, sans-serif;
  font-size: 11px;
  color: #000;
}
svg { shape-rendering: crispEdges; display: block; }
.sprite { position: absolute; width: 0; height: 0; }

/* sidebar */
.sidebar {
  display: flex;
  flex-direction: column;
  flex: none;
  width: 96px;
  border-left: 2px solid #696969;
  border-top: 1px solid #696969;
  background: #a0a0a0;
}
.tab {
  width: 94px;
  border: 1px solid #696969;
  border-top-color: #fff;
  border-left-color: #fff;
  box-shadow: inset -1px -1px #b0b0b0;
  background: #f0f0f0;
  padding: 0;
  font: 11px/13px "Liberation Sans", Arial, sans-serif;
  color: #000;
  letter-spacing: 0;
}
.tab-top { height: 52px; padding-top: 1px; }
.tab-bottom { height: 26px; margin-top: auto; padding-bottom: 2px; }
.nav { display: flex; flex-direction: column; padding-top: 6px; }
.nav-item {
  display: flex;
  flex-direction: column;
  align-items: center;
  gap: 7px;
  height: 63px;
  color: #fff;
  line-height: 13px;
  text-align: center;
  white-space: nowrap;
  letter-spacing: -0.25px;
}
.nav-item.two { height: 76px; }
.nav-item svg { width: 32px; height: 32px; flex: none; }
.splitter { flex: none; width: 5px; background: #f0f0f0; }

/* main stage */
.stage {
  flex: 1;
  display: flex;
  flex-direction: column;
  min-width: 0;
  border: 1px solid #696969;
  background: #b4d4e1;
}
.size-badge {
  width: 128px;
  height: 21px;
  margin: 4px 0 0 4px;
  border: 1px solid #696969;
  background: #f0f0f0;
  line-height: 18px;
  text-align: center;
}
.heading {
  display: flex;
  justify-content: space-between;
  align-items: flex-end;
  height: 194px;
  padding: 0 96px 5px 21px;
}
h1 {
  margin: 0 0 24px;
  font: bold 32px/40px "DejaVu Sans Condensed", "DejaVu Sans", sans-serif;
  font-stretch: condensed;
  letter-spacing: -0.68px;
  color: #6a8abf;
  white-space: nowrap;
}
.logo { width: 186px; height: 35px; shape-rendering: auto; }
.map { flex: none; width: 1817px; height: 617px; overflow: visible; }

.glyph { font-family: "DejaVu Sans Condensed", "DejaVu Sans", sans-serif; font-weight: bold; fill: #000; stroke: none; }
.led80 { font-family: "Liberation Sans", Arial, sans-serif; font-size: 24px; fill: #fff; stroke: #fff; stroke-width: 0.7; }
.edge { fill: none; stroke: #fff; stroke-width: 2; opacity: 0.58; }
.dash { fill: none; stroke: #fff; stroke-width: 1; stroke-dasharray: 6 5.5; opacity: 0.7; }
.flow { fill: #fff; }
.stem { stroke: #e8e8e8; stroke-width: 1.5; }
.place { font: bold 11px "DejaVu Sans", Verdana, sans-serif; fill: #6080bb; }
.zone { font: bold 16px "DejaVu Sans", Verdana, sans-serif; fill: #b4d3e0; }
.mark { font: 10.5px "Liberation Sans", Arial, sans-serif; fill: #000; }
.frame { fill: none; stroke: #c0c0c0; }
.vms rect { fill: #000; stroke: #c0c0c0; }
.led { font: 9.5px "Liberation Sans", Arial, sans-serif; fill: #ff0; }
.led-l { font-size: 12.5px; }
.led-err { fill: #e03c3c; }
.plate { fill: #95b3f4; stroke: #000; }

/* lower panels */
.panels { display: flex; align-items: flex-end; height: 191px; padding-left: 18px; }
.panel {
  flex: none;
  border: 1px solid #000;
  background: #95b3f4;
  font: bold 10.5px "DejaVu Sans Condensed", "DejaVu Sans", sans-serif;
  font-stretch: condensed;
  letter-spacing: -0.25px;
  color: #00207f;
}
.panel h2 { margin: 0; height: 17px; padding-right: 11px; font: inherit; font-size: 11px; line-height: 17px; text-align: right; color: #000; }
.vent h2, .scen h2 { padding-right: 12px; }
.ct { width: 344px; height: 190px; align-self: flex-start; }
.ct-body { display: flex; }
.ct-labels { width: 119px; margin: 7px 0 0; padding: 0 0 0 21px; list-style: none; }
.ct-labels li { height: 37px; line-height: 37px; }
.ct-labels li.in { padding-left: 1px; }
.ct-labels li:last-child { height: 27px; line-height: 27px; }
.ct-devices { width: 218px; height: 160px; }
.ct-norte { width: 342px; margin-left: 60px; }
.ct-norte .ct-labels { width: 117px; padding-left: 33px; }
.ct-norte .ct-labels li:last-child { height: 34px; line-height: 33px; }
.state { font: 11px "Liberation Sans", Arial, sans-serif; letter-spacing: 0; fill: #000; }
.vent { width: 401px; height: 152px; margin-left: 57px; }
.vent-row { display: flex; align-items: center; height: 50px; margin-top: 3px; padding-left: 17px; }
.vent-row + .vent-row { margin-top: 7px; }
.vent-row span { width: 118px; margin-top: -8px; }
.vent-row + .vent-row span { margin-top: -4px; }
.vent-row svg { width: 50px; height: 50px; }
.vent-row b { margin-left: 4px; color: #000; }
.scen { width: 514px; height: 152px; margin-left: 56px; }
.scen-grid {
  display: grid;
  grid-template-columns: 127px 87px 14px 38px 38px 38px 39px 38px 38px 38px;
  grid-template-rows: 18px 20px 37px 37px;
  margin-top: 2px;
  align-items: center;
  justify-items: center;
  white-space: nowrap;
}
.grp { grid-row: 1; }
.h { grid-row: 2; margin-top: -2px; }
.r3 { grid-row: 3; }
.r4 { grid-row: 4; }
.g-bur { grid-column: 4 / 7; }
.g-cor { grid-column: 8 / 11; }
.rowl { grid-column: 1; justify-self: start; padding-left: 21px; }
.rowl.r3 { margin-bottom: 4px; }
.c2 { grid-column: 2; } .c4 { grid-column: 4; } .c5 { grid-column: 5; } .c6 { grid-column: 6; }
.c8 { grid-column: 8; } .c9 { grid-column: 9; } .c10 { grid-column: 10; }
.p { width: 31px; height: 32px; --top: #c0c0c0; --side: #808080; --lens: #000; --roi: #fff; }
.p.on { --top: #00ff00; --side: #008000; --lens: #00ffff; --roi: #00ffff; }
.p { margin-left: -1px; }
.ptz-top, .ptz-mount { fill: var(--top); }
.ptz-side { fill: var(--side); }
.ptz-lens { fill: var(--lens); }
.ptz-roi { fill: var(--roi); }
```
